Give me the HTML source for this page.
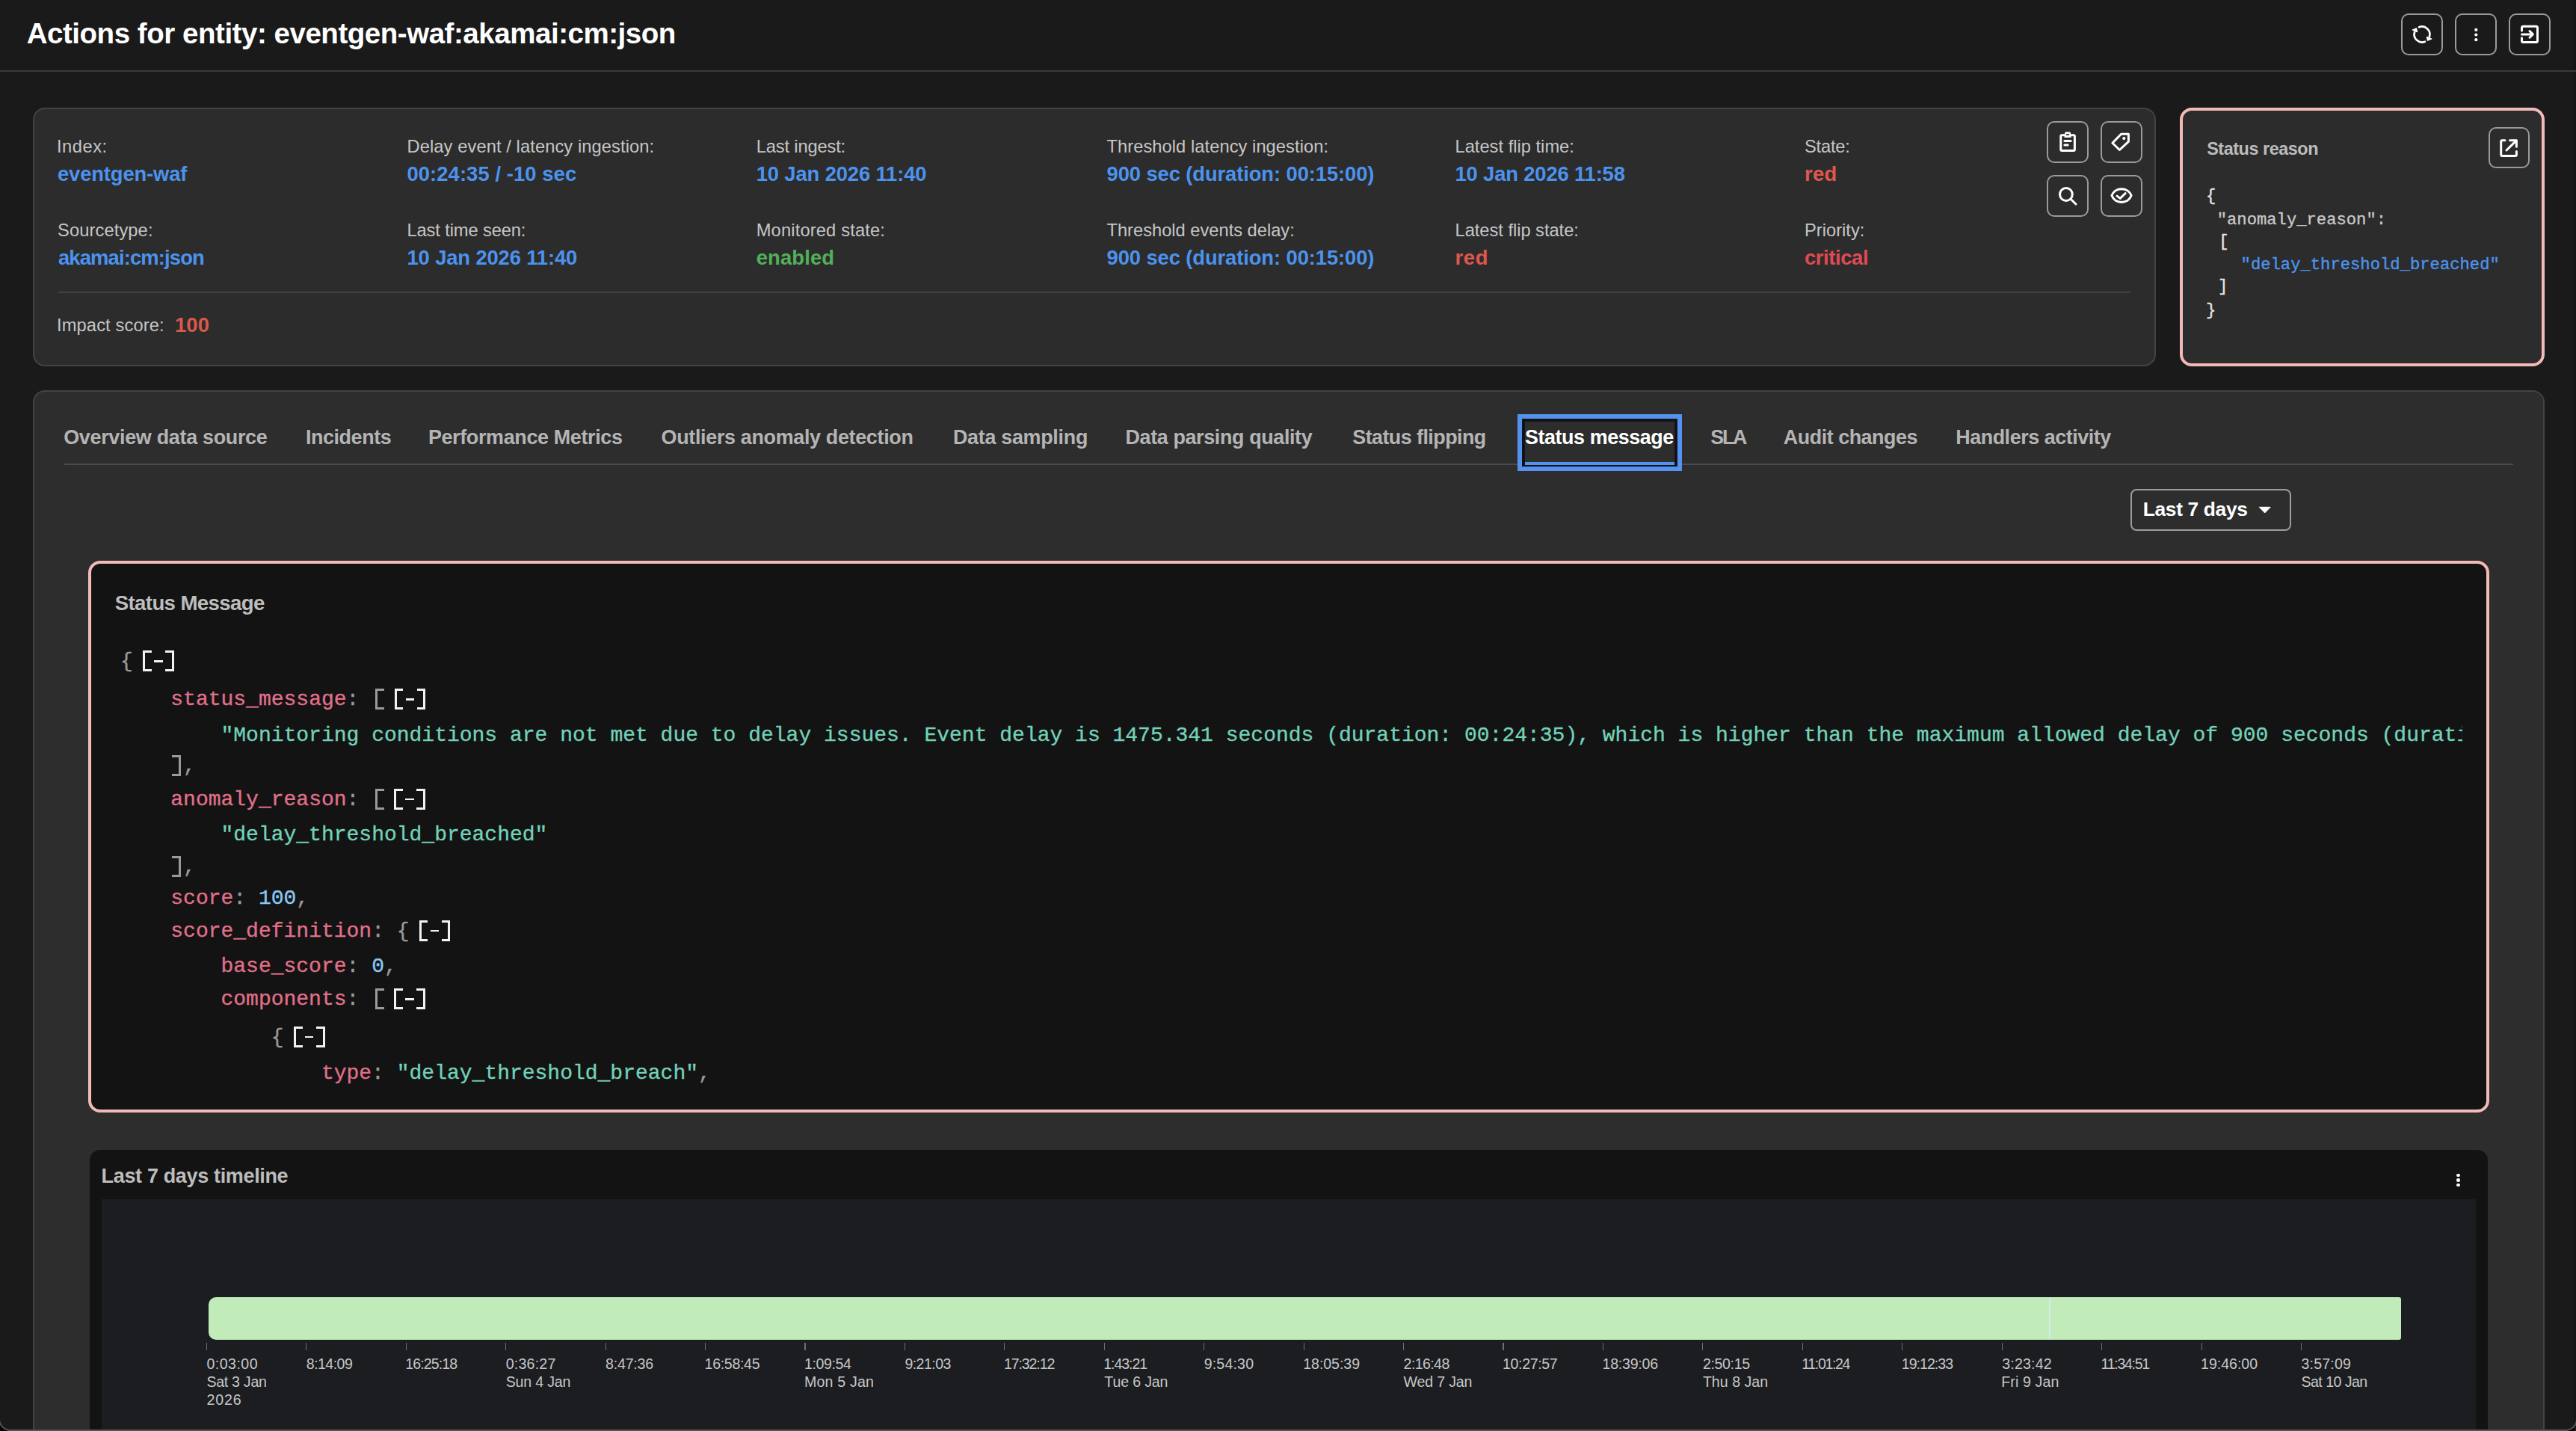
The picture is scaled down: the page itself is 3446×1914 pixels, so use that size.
<!DOCTYPE html>
<html><head><meta charset="utf-8"><style>
html,body{margin:0;padding:0;width:3446px;height:1914px;overflow:hidden;background:#000}
.t{position:absolute;white-space:pre}
.r{position:absolute}
</style></head><body>
<div class="r" style="left:-2.0px;top:-40.0px;width:3450.0px;height:1954.0px;background:#1a1a1a;border-radius:16px"></div>
<div class="r" style="left:3442.5px;top:0.0px;width:4.0px;height:1914.0px;background:#151515"></div>
<div class="t" style="left:35.7px;top:25.5px;font:bold 38.5px/38.5px 'Liberation Sans', sans-serif;color:#ffffff;letter-spacing:-0.463px;">Actions for entity: eventgen-waf:akamai:cm:json</div>
<div class="r" style="left:0.0px;top:94.0px;width:3446.0px;height:2.0px;background:#3a3a3a"></div>
<div class="r" style="left:3212.0px;top:18.0px;width:56.0px;height:56.0px;border:2px solid #9a9a9a;border-radius:10px;box-sizing:border-box"></div>
<div class="r" style="left:3284.0px;top:18.0px;width:56.0px;height:56.0px;border:2px solid #9a9a9a;border-radius:10px;box-sizing:border-box"></div>
<div class="r" style="left:3356.0px;top:18.0px;width:56.0px;height:56.0px;border:2px solid #9a9a9a;border-radius:10px;box-sizing:border-box"></div>
<div class="r" style="left:44.0px;top:144.0px;width:2840.0px;height:346.0px;background:#2c2c2c;border:2px solid #434343;border-radius:16px;box-sizing:border-box"></div>
<div class="t" style="left:76.0px;top:185.4px;font:normal 23.7px/23.7px 'Liberation Sans', sans-serif;color:#c6c6c6;letter-spacing:0.511px;">Index:</div>
<div class="t" style="left:77.0px;top:219.0px;font:bold 27.4px/27.4px 'Liberation Sans', sans-serif;color:#4b93ee;letter-spacing:-0.146px;">eventgen-waf</div>
<div class="t" style="left:544.5px;top:185.4px;font:normal 23.7px/23.7px 'Liberation Sans', sans-serif;color:#c6c6c6;letter-spacing:0.091px;">Delay event / latency ingestion:</div>
<div class="t" style="left:544.5px;top:219.0px;font:bold 27.4px/27.4px 'Liberation Sans', sans-serif;color:#4b93ee;letter-spacing:0.074px;">00:24:35 / -10 sec</div>
<div class="t" style="left:1011.7px;top:185.4px;font:normal 23.7px/23.7px 'Liberation Sans', sans-serif;color:#c6c6c6;letter-spacing:-0.151px;">Last ingest:</div>
<div class="t" style="left:1011.7px;top:219.0px;font:bold 27.4px/27.4px 'Liberation Sans', sans-serif;color:#4b93ee;letter-spacing:-0.134px;">10 Jan 2026 11:40</div>
<div class="t" style="left:1480.5px;top:185.4px;font:normal 23.7px/23.7px 'Liberation Sans', sans-serif;color:#c6c6c6;letter-spacing:0.057px;">Threshold latency ingestion:</div>
<div class="t" style="left:1480.5px;top:219.0px;font:bold 27.4px/27.4px 'Liberation Sans', sans-serif;color:#4b93ee;letter-spacing:-0.106px;">900 sec (duration: 00:15:00)</div>
<div class="t" style="left:1946.5px;top:185.4px;font:normal 23.7px/23.7px 'Liberation Sans', sans-serif;color:#c6c6c6;letter-spacing:0.005px;">Latest flip time:</div>
<div class="t" style="left:1946.5px;top:219.0px;font:bold 27.4px/27.4px 'Liberation Sans', sans-serif;color:#4b93ee;letter-spacing:-0.159px;">10 Jan 2026 11:58</div>
<div class="t" style="left:2414.0px;top:185.4px;font:normal 23.7px/23.7px 'Liberation Sans', sans-serif;color:#c6c6c6;letter-spacing:-0.222px;">State:</div>
<div class="t" style="left:2414.0px;top:219.0px;font:bold 27.4px/27.4px 'Liberation Sans', sans-serif;color:#e0584d;letter-spacing:0.304px;">red</div>
<div class="t" style="left:77.0px;top:297.4px;font:normal 23.7px/23.7px 'Liberation Sans', sans-serif;color:#c6c6c6;letter-spacing:0.107px;">Sourcetype:</div>
<div class="t" style="left:78.0px;top:330.5px;font:bold 27.4px/27.4px 'Liberation Sans', sans-serif;color:#4b93ee;letter-spacing:-0.869px;">akamai:cm:json</div>
<div class="t" style="left:544.5px;top:297.4px;font:normal 23.7px/23.7px 'Liberation Sans', sans-serif;color:#c6c6c6;letter-spacing:-0.125px;">Last time seen:</div>
<div class="t" style="left:544.5px;top:330.5px;font:bold 27.4px/27.4px 'Liberation Sans', sans-serif;color:#4b93ee;letter-spacing:-0.140px;">10 Jan 2026 11:40</div>
<div class="t" style="left:1011.7px;top:297.4px;font:normal 23.7px/23.7px 'Liberation Sans', sans-serif;color:#c6c6c6;letter-spacing:0.155px;">Monitored state:</div>
<div class="t" style="left:1011.7px;top:330.5px;font:bold 27.4px/27.4px 'Liberation Sans', sans-serif;color:#52b05a;letter-spacing:0.138px;">enabled</div>
<div class="t" style="left:1480.5px;top:297.4px;font:normal 23.7px/23.7px 'Liberation Sans', sans-serif;color:#c6c6c6;letter-spacing:-0.010px;">Threshold events delay:</div>
<div class="t" style="left:1480.5px;top:330.5px;font:bold 27.4px/27.4px 'Liberation Sans', sans-serif;color:#4b93ee;letter-spacing:-0.106px;">900 sec (duration: 00:15:00)</div>
<div class="t" style="left:1946.5px;top:297.4px;font:normal 23.7px/23.7px 'Liberation Sans', sans-serif;color:#c6c6c6;letter-spacing:-0.031px;">Latest flip state:</div>
<div class="t" style="left:1946.5px;top:330.5px;font:bold 27.4px/27.4px 'Liberation Sans', sans-serif;color:#e0584d;letter-spacing:0.654px;">red</div>
<div class="t" style="left:2414.0px;top:297.4px;font:normal 23.7px/23.7px 'Liberation Sans', sans-serif;color:#c6c6c6;letter-spacing:0.013px;">Priority:</div>
<div class="t" style="left:2414.0px;top:330.5px;font:bold 27.4px/27.4px 'Liberation Sans', sans-serif;color:#e04a55;letter-spacing:-0.400px;">critical</div>
<div class="r" style="left:78.0px;top:390.0px;width:2772.0px;height:2.0px;background:#424242"></div>
<div class="t" style="left:76.0px;top:423.9px;font:normal 23.7px/23.7px 'Liberation Sans', sans-serif;color:#c6c6c6;letter-spacing:0.117px;">Impact score:</div>
<div class="t" style="left:234.0px;top:421.0px;font:bold 27.4px/27.4px 'Liberation Sans', sans-serif;color:#d9594c;letter-spacing:0.117px;">100</div>
<div class="r" style="left:2738.0px;top:162.0px;width:56.0px;height:56.0px;border:2px solid #9a9a9a;border-radius:10px;box-sizing:border-box"></div>
<div class="r" style="left:2810.0px;top:162.0px;width:56.0px;height:56.0px;border:2px solid #9a9a9a;border-radius:10px;box-sizing:border-box"></div>
<div class="r" style="left:2738.0px;top:234.0px;width:56.0px;height:56.0px;border:2px solid #9a9a9a;border-radius:10px;box-sizing:border-box"></div>
<div class="r" style="left:2810.0px;top:234.0px;width:56.0px;height:56.0px;border:2px solid #9a9a9a;border-radius:10px;box-sizing:border-box"></div>
<div class="r" style="left:2916.0px;top:144.0px;width:488.0px;height:346.0px;background:#2c2c2c;border:4px solid #f4b9b9;border-radius:16px;box-sizing:border-box"></div>
<div class="t" style="left:2952.2px;top:187.8px;font:bold 23.4px/23.4px 'Liberation Sans', sans-serif;color:#bcbcbc;letter-spacing:-0.450px;">Status reason</div>
<div class="r" style="left:3328.5px;top:170.2px;width:55.3px;height:55.3px;border:2px solid #9a9a9a;border-radius:10px;box-sizing:border-box"></div>
<div class="t" style="left:2951.1px;top:251.6px;font:normal 22.2px/22.2px 'Liberation Mono', monospace;color:#e6e6e6;white-space:pre;-webkit-text-stroke:0.35px currentColor">{</div>
<div class="t" style="left:2965.7px;top:283.6px;font:normal 22.2px/22.2px 'Liberation Mono', monospace;color:#c8c8c8;white-space:pre;-webkit-text-stroke:0.35px currentColor">"anomaly_reason":</div>
<div class="t" style="left:2968.2px;top:312.6px;font:normal 22.2px/22.2px 'Liberation Mono', monospace;color:#e6e6e6;white-space:pre;-webkit-text-stroke:0.35px currentColor">[</div>
<div class="t" style="left:2997.6px;top:343.6px;font:normal 22.2px/22.2px 'Liberation Mono', monospace;color:#4d94ee;white-space:pre;-webkit-text-stroke:0.35px currentColor">"delay_threshold_breached"</div>
<div class="t" style="left:2967.1px;top:373.1px;font:normal 22.2px/22.2px 'Liberation Mono', monospace;color:#e6e6e6;white-space:pre;-webkit-text-stroke:0.35px currentColor">]</div>
<div class="t" style="left:2951.1px;top:404.6px;font:normal 22.2px/22.2px 'Liberation Mono', monospace;color:#e6e6e6;white-space:pre;-webkit-text-stroke:0.35px currentColor">}</div>
<div class="r" style="left:44.0px;top:522.0px;width:3360.0px;height:1500.0px;background:#2d2d2d;border:2px solid #434343;border-radius:16px;box-sizing:border-box"></div>
<div class="r" style="left:86.0px;top:620.0px;width:3275.5px;height:2.0px;background:#4a4b52"></div>
<div class="r" style="left:2030.0px;top:554.0px;width:220.0px;height:76.0px;background:#5592f0"></div>
<div class="r" style="left:2036.0px;top:560.0px;width:208.0px;height:64.0px;background:#121317"></div>
<div class="r" style="left:2040.0px;top:564.0px;width:200.0px;height:54.0px;background:#2d2d2d"></div>
<div class="r" style="left:2040.0px;top:618.0px;width:200.0px;height:4.0px;background:#5592f0"></div>
<div class="t" style="left:85.2px;top:571.7px;font:bold 26.9px/26.9px 'Liberation Sans', sans-serif;color:#b4b4b4;letter-spacing:-0.287px;">Overview data source</div>
<div class="t" style="left:408.9px;top:571.7px;font:bold 26.9px/26.9px 'Liberation Sans', sans-serif;color:#b4b4b4;letter-spacing:-0.411px;">Incidents</div>
<div class="t" style="left:572.9px;top:571.7px;font:bold 26.9px/26.9px 'Liberation Sans', sans-serif;color:#b4b4b4;letter-spacing:-0.332px;">Performance Metrics</div>
<div class="t" style="left:884.6px;top:571.7px;font:bold 26.9px/26.9px 'Liberation Sans', sans-serif;color:#b4b4b4;letter-spacing:-0.318px;">Outliers anomaly detection</div>
<div class="t" style="left:1274.9px;top:571.7px;font:bold 26.9px/26.9px 'Liberation Sans', sans-serif;color:#b4b4b4;letter-spacing:-0.281px;">Data sampling</div>
<div class="t" style="left:1505.5px;top:571.7px;font:bold 26.9px/26.9px 'Liberation Sans', sans-serif;color:#b4b4b4;letter-spacing:-0.361px;">Data parsing quality</div>
<div class="t" style="left:1809.3px;top:571.7px;font:bold 26.9px/26.9px 'Liberation Sans', sans-serif;color:#b4b4b4;letter-spacing:-0.557px;">Status flipping</div>
<div class="t" style="left:2039.9px;top:571.7px;font:bold 26.9px/26.9px 'Liberation Sans', sans-serif;color:#ffffff;letter-spacing:-0.416px;">Status message</div>
<div class="t" style="left:2288.2px;top:571.7px;font:bold 26.9px/26.9px 'Liberation Sans', sans-serif;color:#b4b4b4;letter-spacing:-2.231px;">SLA</div>
<div class="t" style="left:2385.8px;top:571.7px;font:bold 26.9px/26.9px 'Liberation Sans', sans-serif;color:#b4b4b4;letter-spacing:-0.468px;">Audit changes</div>
<div class="t" style="left:2616.2px;top:571.7px;font:bold 26.9px/26.9px 'Liberation Sans', sans-serif;color:#b4b4b4;letter-spacing:-0.448px;">Handlers activity</div>
<div class="r" style="left:2850.3px;top:654.3px;width:215.0px;height:56.0px;background:#2d2d2d;border:2px solid #9c9c9c;border-radius:8px;box-sizing:border-box"></div>
<div class="t" style="left:2866.8px;top:668.0px;font:bold 26.4px/26.4px 'Liberation Sans', sans-serif;color:#ffffff;letter-spacing:-0.368px;">Last 7 days</div>
<svg class="r" style="left:3019px;top:675px" width="22" height="14"><path d="M3.2 3.3 L18.2 3.3 L10.7 11 Z" fill="#fff" stroke="#fff" stroke-width="1" stroke-linejoin="round"/></svg>
<div class="r" style="left:118.0px;top:750.0px;width:3212.0px;height:737.5px;background:#131313;border:4px solid #f4b9b9;border-radius:16px;box-sizing:border-box"></div>
<div class="t" style="left:153.7px;top:793.1px;font:bold 27.6px/27.6px 'Liberation Sans', sans-serif;color:#bdbdbd;letter-spacing:-0.610px;">Status Message</div>
<div class="t" style="left:161.1px;top:871.2px;font:normal 28.0px/28.0px 'Liberation Mono', monospace;color:#9a9a9a;white-space:pre;-webkit-text-stroke:0.35px currentColor"><span style="color:#9a9a9a">{</span></div>
<div class="r" style="left:191.0px;top:870.1px;width:11.9px;height:28.0px;border-style:solid;border-color:#f2f2f2;border-width:3px 0 3px 3.4px;box-sizing:border-box"></div>
<div class="r" style="left:206.0px;top:883.2px;width:11.8px;height:2.8px;background:#f2f2f2"></div>
<div class="r" style="left:221.0px;top:870.1px;width:11.9px;height:28.0px;border-style:solid;border-color:#f2f2f2;border-width:3px 3.4px 3px 0;box-sizing:border-box"></div>
<div class="t" style="left:228.3px;top:922.0px;font:normal 28.0px/28.0px 'Liberation Mono', monospace;color:#9a9a9a;white-space:pre;-webkit-text-stroke:0.35px currentColor"><span style="color:#e0708a">status_message</span><span style="color:#9a9a9a">:</span></div>
<div class="r" style="left:502.3px;top:920.9px;width:11.9px;height:28.0px;border-style:solid;border-color:#9a9a9a;border-width:3px 0 3px 3.4px;box-sizing:border-box"></div>
<div class="r" style="left:527.5px;top:920.9px;width:11.9px;height:28.0px;border-style:solid;border-color:#f2f2f2;border-width:3px 0 3px 3.4px;box-sizing:border-box"></div>
<div class="r" style="left:542.5px;top:934.0px;width:11.8px;height:2.8px;background:#f2f2f2"></div>
<div class="r" style="left:557.5px;top:920.9px;width:11.9px;height:28.0px;border-style:solid;border-color:#f2f2f2;border-width:3px 3.4px 3px 0;box-sizing:border-box"></div>
<div class="r" style="left:0;top:950px;width:3294.3px;height:60px;overflow:hidden">
<div class="t" style="left:295.5px;top:19.6px;font:normal 28.0px/28.0px 'Liberation Mono', monospace;color:#72d2b9;white-space:pre;-webkit-text-stroke:0.35px currentColor"><span style="color:#72d2b9">"Monitoring conditions are not met due to delay issues. Event delay is 1475.341 seconds (duration: 00:24:35), which is higher than the maximum allowed delay of 900 seconds (duration: 00:15:00)."</span></div>
</div>
<div class="t" style="left:228.3px;top:1011.2px;font:normal 28.0px/28.0px 'Liberation Mono', monospace;color:#9a9a9a;white-space:pre;-webkit-text-stroke:0.35px currentColor"><span style="color:#9a9a9a"> ,</span></div>
<div class="r" style="left:230.4px;top:1010.1px;width:11.9px;height:28.0px;border-style:solid;border-color:#9a9a9a;border-width:3px 3.4px 3px 0;box-sizing:border-box"></div>
<div class="t" style="left:228.3px;top:1055.6px;font:normal 28.0px/28.0px 'Liberation Mono', monospace;color:#9a9a9a;white-space:pre;-webkit-text-stroke:0.35px currentColor"><span style="color:#e0708a">anomaly_reason</span><span style="color:#9a9a9a">:</span></div>
<div class="r" style="left:501.8px;top:1054.5px;width:11.9px;height:28.0px;border-style:solid;border-color:#9a9a9a;border-width:3px 0 3px 3.4px;box-sizing:border-box"></div>
<div class="r" style="left:527.0px;top:1054.5px;width:11.9px;height:28.0px;border-style:solid;border-color:#f2f2f2;border-width:3px 0 3px 3.4px;box-sizing:border-box"></div>
<div class="r" style="left:542.0px;top:1067.6px;width:11.8px;height:2.8px;background:#f2f2f2"></div>
<div class="r" style="left:557.0px;top:1054.5px;width:11.9px;height:28.0px;border-style:solid;border-color:#f2f2f2;border-width:3px 3.4px 3px 0;box-sizing:border-box"></div>
<div class="t" style="left:295.5px;top:1103.1px;font:normal 28.0px/28.0px 'Liberation Mono', monospace;color:#9a9a9a;white-space:pre;-webkit-text-stroke:0.35px currentColor"><span style="color:#72d2b9">"delay_threshold_breached"</span></div>
<div class="t" style="left:228.3px;top:1145.7px;font:normal 28.0px/28.0px 'Liberation Mono', monospace;color:#9a9a9a;white-space:pre;-webkit-text-stroke:0.35px currentColor"><span style="color:#9a9a9a"> ,</span></div>
<div class="r" style="left:230.2px;top:1144.6px;width:11.9px;height:28.0px;border-style:solid;border-color:#9a9a9a;border-width:3px 3.4px 3px 0;box-sizing:border-box"></div>
<div class="t" style="left:228.3px;top:1187.6px;font:normal 28.0px/28.0px 'Liberation Mono', monospace;color:#9a9a9a;white-space:pre;-webkit-text-stroke:0.35px currentColor"><span style="color:#e0708a">score</span><span style="color:#9a9a9a">: </span><span style="color:#88c9f3">100</span><span style="color:#9a9a9a">,</span></div>
<div class="t" style="left:228.3px;top:1231.7px;font:normal 28.0px/28.0px 'Liberation Mono', monospace;color:#9a9a9a;white-space:pre;-webkit-text-stroke:0.35px currentColor"><span style="color:#e0708a">score_definition</span><span style="color:#9a9a9a">: {</span></div>
<div class="r" style="left:560.6px;top:1230.6px;width:11.9px;height:28.0px;border-style:solid;border-color:#f2f2f2;border-width:3px 0 3px 3.4px;box-sizing:border-box"></div>
<div class="r" style="left:575.6px;top:1243.7px;width:11.8px;height:2.8px;background:#f2f2f2"></div>
<div class="r" style="left:590.6px;top:1230.6px;width:11.9px;height:28.0px;border-style:solid;border-color:#f2f2f2;border-width:3px 3.4px 3px 0;box-sizing:border-box"></div>
<div class="t" style="left:295.5px;top:1279.2px;font:normal 28.0px/28.0px 'Liberation Mono', monospace;color:#9a9a9a;white-space:pre;-webkit-text-stroke:0.35px currentColor"><span style="color:#e0708a">base_score</span><span style="color:#9a9a9a">: </span><span style="color:#88c9f3">0</span><span style="color:#9a9a9a">,</span></div>
<div class="t" style="left:295.5px;top:1322.9px;font:normal 28.0px/28.0px 'Liberation Mono', monospace;color:#9a9a9a;white-space:pre;-webkit-text-stroke:0.35px currentColor"><span style="color:#e0708a">components</span><span style="color:#9a9a9a">:</span></div>
<div class="r" style="left:501.8px;top:1321.8px;width:11.9px;height:28.0px;border-style:solid;border-color:#9a9a9a;border-width:3px 0 3px 3.4px;box-sizing:border-box"></div>
<div class="r" style="left:527.0px;top:1321.8px;width:11.9px;height:28.0px;border-style:solid;border-color:#f2f2f2;border-width:3px 0 3px 3.4px;box-sizing:border-box"></div>
<div class="r" style="left:542.0px;top:1334.9px;width:11.8px;height:2.8px;background:#f2f2f2"></div>
<div class="r" style="left:557.0px;top:1321.8px;width:11.9px;height:28.0px;border-style:solid;border-color:#f2f2f2;border-width:3px 3.4px 3px 0;box-sizing:border-box"></div>
<div class="t" style="left:362.7px;top:1373.7px;font:normal 28.0px/28.0px 'Liberation Mono', monospace;color:#9a9a9a;white-space:pre;-webkit-text-stroke:0.35px currentColor"><span style="color:#9a9a9a">{</span></div>
<div class="r" style="left:392.7px;top:1372.6px;width:11.9px;height:28.0px;border-style:solid;border-color:#f2f2f2;border-width:3px 0 3px 3.4px;box-sizing:border-box"></div>
<div class="r" style="left:407.7px;top:1385.7px;width:11.8px;height:2.8px;background:#f2f2f2"></div>
<div class="r" style="left:422.7px;top:1372.6px;width:11.9px;height:28.0px;border-style:solid;border-color:#f2f2f2;border-width:3px 3.4px 3px 0;box-sizing:border-box"></div>
<div class="t" style="left:429.9px;top:1421.9px;font:normal 28.0px/28.0px 'Liberation Mono', monospace;color:#9a9a9a;white-space:pre;-webkit-text-stroke:0.35px currentColor"><span style="color:#e0708a">type</span><span style="color:#9a9a9a">: </span><span style="color:#72d2b9">"delay_threshold_breach"</span><span style="color:#9a9a9a">,</span></div>
<div class="r" style="left:120.0px;top:1538.0px;width:3208.0px;height:500.0px;background:#131313;border-radius:14px"></div>
<div class="t" style="left:135.6px;top:1560.1px;font:bold 27.0px/27.0px 'Liberation Sans', sans-serif;color:#bdbdbd;letter-spacing:-0.347px;">Last 7 days timeline</div>
<div class="r" style="left:136.0px;top:1604.3px;width:3176.0px;height:400.0px;background:#1c1d21"></div>
<div class="r" style="left:3286.2px;top:1569.6px;width:4.6px;height:4.6px;background:#fff;border-radius:50%"></div>
<div class="r" style="left:3286.2px;top:1576.2px;width:4.6px;height:4.6px;background:#fff;border-radius:50%"></div>
<div class="r" style="left:3286.2px;top:1582.8px;width:4.6px;height:4.6px;background:#fff;border-radius:50%"></div>
<div class="r" style="left:278.8px;top:1735.0px;width:2933.2px;height:57.2px;background:#c2ebba;border-radius:10px 3px 3px 10px"></div>
<div class="r" style="left:2741.4px;top:1736.5px;width:1.8px;height:54.8px;background:#d3ecec;border-radius:1px"></div>
<div class="r" style="left:275.8px;top:1795.6px;width:1.2px;height:10.5px;background:#6e6f73"></div>
<div class="t" style="left:276.4px;top:1815.1px;font:normal 19.6px/19.6px 'Liberation Sans', sans-serif;color:#c6c6c6;letter-spacing:0.471px;">0:03:00</div>
<div class="t" style="left:276.4px;top:1839.3px;font:normal 19.6px/19.6px 'Liberation Sans', sans-serif;color:#c6c6c6;letter-spacing:-0.286px;">Sat 3 Jan</div>
<div class="t" style="left:276.4px;top:1862.9px;font:normal 19.6px/19.6px 'Liberation Sans', sans-serif;color:#c6c6c6;letter-spacing:0.903px;">2026</div>
<div class="r" style="left:409.2px;top:1795.6px;width:1.2px;height:10.5px;background:#6e6f73"></div>
<div class="t" style="left:409.8px;top:1815.1px;font:normal 19.6px/19.6px 'Liberation Sans', sans-serif;color:#c6c6c6;letter-spacing:-0.563px;">8:14:09</div>
<div class="r" style="left:542.7px;top:1795.6px;width:1.2px;height:10.5px;background:#6e6f73"></div>
<div class="t" style="left:542.3px;top:1815.1px;font:normal 19.6px/19.6px 'Liberation Sans', sans-serif;color:#c6c6c6;letter-spacing:-0.925px;">16:25:18</div>
<div class="r" style="left:676.1px;top:1795.6px;width:1.2px;height:10.5px;background:#6e6f73"></div>
<div class="t" style="left:676.7px;top:1815.1px;font:normal 19.6px/19.6px 'Liberation Sans', sans-serif;color:#c6c6c6;letter-spacing:0.221px;">0:36:27</div>
<div class="t" style="left:676.7px;top:1839.3px;font:normal 19.6px/19.6px 'Liberation Sans', sans-serif;color:#c6c6c6;letter-spacing:-0.180px;">Sun 4 Jan</div>
<div class="r" style="left:809.5px;top:1795.6px;width:1.2px;height:10.5px;background:#6e6f73"></div>
<div class="t" style="left:810.1px;top:1815.1px;font:normal 19.6px/19.6px 'Liberation Sans', sans-serif;color:#c6c6c6;letter-spacing:-0.229px;">8:47:36</div>
<div class="r" style="left:943.0px;top:1795.6px;width:1.2px;height:10.5px;background:#6e6f73"></div>
<div class="t" style="left:942.6px;top:1815.1px;font:normal 19.6px/19.6px 'Liberation Sans', sans-serif;color:#c6c6c6;letter-spacing:-0.325px;">16:58:45</div>
<div class="r" style="left:1076.4px;top:1795.6px;width:1.2px;height:10.5px;background:#6e6f73"></div>
<div class="t" style="left:1076.0px;top:1815.1px;font:normal 19.6px/19.6px 'Liberation Sans', sans-serif;color:#c6c6c6;letter-spacing:-0.429px;">1:09:54</div>
<div class="t" style="left:1076.0px;top:1839.3px;font:normal 19.6px/19.6px 'Liberation Sans', sans-serif;color:#c6c6c6;letter-spacing:0.188px;">Mon 5 Jan</div>
<div class="r" style="left:1209.8px;top:1795.6px;width:1.2px;height:10.5px;background:#6e6f73"></div>
<div class="t" style="left:1210.4px;top:1815.1px;font:normal 19.6px/19.6px 'Liberation Sans', sans-serif;color:#c6c6c6;letter-spacing:-0.563px;">9:21:03</div>
<div class="r" style="left:1343.3px;top:1795.6px;width:1.2px;height:10.5px;background:#6e6f73"></div>
<div class="t" style="left:1342.9px;top:1815.1px;font:normal 19.6px/19.6px 'Liberation Sans', sans-serif;color:#c6c6c6;letter-spacing:-1.110px;">17:32:12</div>
<div class="r" style="left:1476.7px;top:1795.6px;width:1.2px;height:10.5px;background:#6e6f73"></div>
<div class="t" style="left:1476.3px;top:1815.1px;font:normal 19.6px/19.6px 'Liberation Sans', sans-serif;color:#c6c6c6;letter-spacing:-1.096px;">1:43:21</div>
<div class="t" style="left:1477.3px;top:1839.3px;font:normal 19.6px/19.6px 'Liberation Sans', sans-serif;color:#c6c6c6;letter-spacing:-0.152px;">Tue 6 Jan</div>
<div class="r" style="left:1610.1px;top:1795.6px;width:1.2px;height:10.5px;background:#6e6f73"></div>
<div class="t" style="left:1610.7px;top:1815.1px;font:normal 19.6px/19.6px 'Liberation Sans', sans-serif;color:#c6c6c6;letter-spacing:0.171px;">9:54:30</div>
<div class="r" style="left:1743.6px;top:1795.6px;width:1.2px;height:10.5px;background:#6e6f73"></div>
<div class="t" style="left:1743.2px;top:1815.1px;font:normal 19.6px/19.6px 'Liberation Sans', sans-serif;color:#c6c6c6;letter-spacing:-0.053px;">18:05:39</div>
<div class="r" style="left:1877.0px;top:1795.6px;width:1.2px;height:10.5px;background:#6e6f73"></div>
<div class="t" style="left:1877.6px;top:1815.1px;font:normal 19.6px/19.6px 'Liberation Sans', sans-serif;color:#c6c6c6;letter-spacing:-0.613px;">2:16:48</div>
<div class="t" style="left:1877.6px;top:1839.3px;font:normal 19.6px/19.6px 'Liberation Sans', sans-serif;color:#c6c6c6;letter-spacing:-0.189px;">Wed 7 Jan</div>
<div class="r" style="left:2010.4px;top:1795.6px;width:1.2px;height:10.5px;background:#6e6f73"></div>
<div class="t" style="left:2010.0px;top:1815.1px;font:normal 19.6px/19.6px 'Liberation Sans', sans-serif;color:#c6c6c6;letter-spacing:-0.368px;">10:27:57</div>
<div class="r" style="left:2143.9px;top:1795.6px;width:1.2px;height:10.5px;background:#6e6f73"></div>
<div class="t" style="left:2143.5px;top:1815.1px;font:normal 19.6px/19.6px 'Liberation Sans', sans-serif;color:#c6c6c6;letter-spacing:-0.239px;">18:39:06</div>
<div class="r" style="left:2277.3px;top:1795.6px;width:1.2px;height:10.5px;background:#6e6f73"></div>
<div class="t" style="left:2277.9px;top:1815.1px;font:normal 19.6px/19.6px 'Liberation Sans', sans-serif;color:#c6c6c6;letter-spacing:-0.363px;">2:50:15</div>
<div class="t" style="left:2277.9px;top:1839.3px;font:normal 19.6px/19.6px 'Liberation Sans', sans-serif;color:#c6c6c6;letter-spacing:0.007px;">Thu 8 Jan</div>
<div class="r" style="left:2410.7px;top:1795.6px;width:1.2px;height:10.5px;background:#6e6f73"></div>
<div class="t" style="left:2410.3px;top:1815.1px;font:normal 19.6px/19.6px 'Liberation Sans', sans-serif;color:#c6c6c6;letter-spacing:-1.388px;">11:01:24</div>
<div class="r" style="left:2544.2px;top:1795.6px;width:1.2px;height:10.5px;background:#6e6f73"></div>
<div class="t" style="left:2543.8px;top:1815.1px;font:normal 19.6px/19.6px 'Liberation Sans', sans-serif;color:#c6c6c6;letter-spacing:-0.996px;">19:12:33</div>
<div class="r" style="left:2677.6px;top:1795.6px;width:1.2px;height:10.5px;background:#6e6f73"></div>
<div class="t" style="left:2678.2px;top:1815.1px;font:normal 19.6px/19.6px 'Liberation Sans', sans-serif;color:#c6c6c6;letter-spacing:0.187px;">3:23:42</div>
<div class="t" style="left:2677.2px;top:1839.3px;font:normal 19.6px/19.6px 'Liberation Sans', sans-serif;color:#c6c6c6;letter-spacing:0.134px;">Fri 9 Jan</div>
<div class="r" style="left:2811.0px;top:1795.6px;width:1.2px;height:10.5px;background:#6e6f73"></div>
<div class="t" style="left:2810.6px;top:1815.1px;font:normal 19.6px/19.6px 'Liberation Sans', sans-serif;color:#c6c6c6;letter-spacing:-1.331px;">11:34:51</div>
<div class="r" style="left:2944.5px;top:1795.6px;width:1.2px;height:10.5px;background:#6e6f73"></div>
<div class="t" style="left:2944.1px;top:1815.1px;font:normal 19.6px/19.6px 'Liberation Sans', sans-serif;color:#c6c6c6;letter-spacing:-0.039px;">19:46:00</div>
<div class="r" style="left:3077.9px;top:1795.6px;width:1.2px;height:10.5px;background:#6e6f73"></div>
<div class="t" style="left:3078.5px;top:1815.1px;font:normal 19.6px/19.6px 'Liberation Sans', sans-serif;color:#c6c6c6;letter-spacing:0.171px;">3:57:09</div>
<div class="t" style="left:3078.5px;top:1839.3px;font:normal 19.6px/19.6px 'Liberation Sans', sans-serif;color:#c6c6c6;letter-spacing:-0.554px;">Sat 10 Jan</div>
<div class="r" style="left:-2.0px;top:-40.0px;width:3450.0px;height:1954.0px;border:2px solid #555;border-radius:16px;box-sizing:border-box;pointer-events:none"></div>
<svg class="r" style="left:0;top:0;overflow:visible" width="3446" height="1914" viewBox="0 0 3446 1914"><path d="M3243.90 55.64 A10.4 10.4 0 0 1 3230.11 42.79" fill="none" stroke="#ffffff" stroke-width="2.7" stroke-linecap="round" stroke-linejoin="round" /><path d="M3236.10 36.36 A10.4 10.4 0 0 1 3249.89 49.21" fill="none" stroke="#ffffff" stroke-width="2.7" stroke-linecap="round" stroke-linejoin="round" /><path d="M3227.2 40.0 L3232.6 37.8 L3233.6 42.7 Z" fill="#fff" stroke="#fff" stroke-width="1.2" stroke-linejoin="round"/><path d="M3252.8 52.0 L3247.4 54.2 L3246.4 49.3 Z" fill="#fff" stroke="#fff" stroke-width="1.2" stroke-linejoin="round"/><circle cx="3312.3" cy="39.9" r="2.1" fill="#fff"/><circle cx="3312.3" cy="46.5" r="2.1" fill="#fff"/><circle cx="3312.3" cy="53.2" r="2.1" fill="#fff"/><path d="M3373.5 41.1 V37.3 Q3373.5 35.3 3375.5 35.3 H3392.5 Q3394.5 35.3 3394.5 37.3 V54.5 Q3394.5 56.5 3392.5 56.5 H3375.5 Q3373.5 56.5 3373.5 54.5 V50.8" fill="none" stroke="#ffffff" stroke-width="3" stroke-linecap="round" stroke-linejoin="round" /><path d="M3373.5 45.9 H3387.5" fill="none" stroke="#ffffff" stroke-width="3" stroke-linecap="round" stroke-linejoin="round" /><path d="M3384 41.6 L3388.3 45.9 L3384 50.2" fill="none" stroke="#ffffff" stroke-width="3" stroke-linecap="round" stroke-linejoin="round" /><path d="M2761.5 180.8 H2758.3 Q2756.8 180.8 2756.8 182.3 V200.1 Q2756.8 201.6 2758.3 201.6 H2773.9 Q2775.4 201.6 2775.4 200.1 V182.3 Q2775.4 180.8 2773.9 180.8 H2770.7" fill="none" stroke="#ffffff" stroke-width="3" stroke-linecap="round" stroke-linejoin="round" /><path fill-rule="evenodd" fill="#fff" d="M2761.4 184 L2762.2 177.9 Q2762.4 176.6 2763.7 176.6 H2768.5 Q2769.8 176.6 2770 177.9 L2770.8 184 Z M2763.9 179.2 H2768.1 V181 H2763.9 Z"/><path d="M2761.9 188.6 H2770.1" fill="none" stroke="#ffffff" stroke-width="3" stroke-linecap="round" stroke-linejoin="round" /><path d="M2761.9 194.1 H2766.2" fill="none" stroke="#ffffff" stroke-width="3" stroke-linecap="round" stroke-linejoin="round" /><path d="M2837.6 179.2 H2847.4 V189.3 L2835.4 200.5 L2825.9 191.2 Z" fill="none" stroke="#ffffff" stroke-width="3" stroke-linecap="round" stroke-linejoin="round" /><circle cx="2841.3" cy="185.1" r="2.1" fill="#fff"/><circle cx="2763.9" cy="260" r="8.4" fill="none" stroke="#fff" stroke-width="3"/><path d="M2770.4 266.5 L2777 273" fill="none" stroke="#ffffff" stroke-width="3" stroke-linecap="round" stroke-linejoin="round" /><path d="M2825 261.6 C2829 249.8 2847 249.8 2851.1 261.6 C2847 273.4 2829 273.4 2825 261.6 Z" fill="none" stroke="#ffffff" stroke-width="3" stroke-linecap="round" stroke-linejoin="round" /><path d="M2832 262.1 L2836.2 265.4 L2843.2 258.5" fill="none" stroke="#ffffff" stroke-width="3" stroke-linecap="round" stroke-linejoin="round" /><path d="M3351 187.7 H3347.2 Q3345.7 187.7 3345.7 189.2 V206.9 Q3345.7 208.4 3347.2 208.4 H3364.9 Q3366.4 208.4 3366.4 206.9 V202.4" fill="none" stroke="#ffffff" stroke-width="3" stroke-linecap="round" stroke-linejoin="round" /><path d="M3357.6 187.7 H3366.4 V196.3" fill="none" stroke="#ffffff" stroke-width="3" stroke-linecap="round" stroke-linejoin="round" /><path d="M3366 188.1 L3353 201" fill="none" stroke="#ffffff" stroke-width="3" stroke-linecap="round" stroke-linejoin="round" /></svg>
</body></html>
